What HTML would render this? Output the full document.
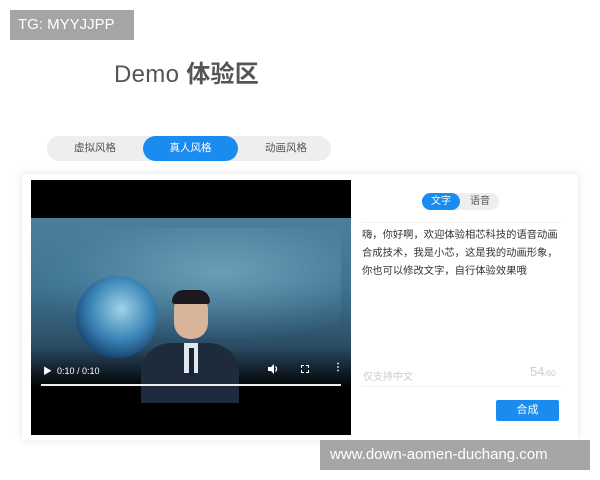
<!DOCTYPE html>
<html><head><meta charset="utf-8"><style>
*{margin:0;padding:0;box-sizing:border-box}
body{width:600px;height:480px;background:#fff;position:relative;overflow:hidden;font-family:"Liberation Sans","Noto Sans CJK SC",sans-serif}
.abs{position:absolute}
.tg{left:10px;top:10px;width:124px;height:30px;background:#a5a5a5;color:#fff;font-size:15px;line-height:30px;padding-left:8px}
.title{left:114px;top:54px;font-size:24px;color:#555;letter-spacing:0.3px}
.tabs{left:47px;top:136px;width:284px;height:25px;border-radius:13px;background:#eee;font-size:10.5px;color:#555}
.tabs span{position:absolute;top:0;line-height:25px}
.act{left:96px;width:95px;height:25px;border-radius:13px;background:#1a8cf0;color:#fff;text-align:center}
.card{left:22px;top:174px;width:556px;height:266px;background:#fff;box-shadow:0 0 8px rgba(0,0,0,.1)}
.video{left:31px;top:180px;width:320px;height:255px;background:#000;overflow:hidden}
.img{left:0;top:38px;width:320px;height:170px;background:linear-gradient(180deg,#4e7d9c 0%,#3f7392 40%,#2b4d66 75%,#000 100%)}
.txt{left:362px;top:227px;width:198px;font-size:10.3px;line-height:18px;color:#333}
.btn{left:496px;top:400px;width:63px;height:21px;background:#1a8cf0;color:#fff;font-size:11px;text-align:center;line-height:21px;border-radius:2px}
.wm{left:320px;top:440px;width:270px;height:30px;background:#a6a6a6;color:#fff;font-size:15px;line-height:30px;padding-left:10px}
</style></head><body>
<div class="abs tg">TG: MYYJJPP</div>
<div class="abs title">Demo <b>体验区</b></div>
<div class="abs tabs">
<span style="left:27px">虚拟风格</span>
<span class="act">真人风格</span>
<span style="left:218px">动画风格</span>
</div>
<div class="abs card"></div>
<div class="abs video">
 <div class="abs img">
  <div class="abs" style="left:10px;top:10px;width:300px;height:110px;background:radial-gradient(ellipse at 60% 40%,rgba(140,190,210,.55),rgba(80,140,170,.2) 60%,transparent 75%)"></div>
  <div class="abs" style="left:45px;top:58px;width:82px;height:82px;border-radius:50%;background:radial-gradient(circle at 55% 40%,#9fd3e8,#3c87b8 45%,#123a66 80%)"></div>
  <div class="abs" style="left:110px;top:125px;width:98px;height:60px;background:#1e2b3d;border-radius:30px 30px 0 0"></div>
  <div class="abs" style="left:153px;top:125px;width:14px;height:30px;background:#dfe6ee"></div>
  <div class="abs" style="left:158px;top:130px;width:5px;height:28px;background:#1a2230"></div>
  <div class="abs" style="left:143px;top:77px;width:34px;height:44px;border-radius:14px 14px 16px 16px;background:#d8b49a"></div>
  <div class="abs" style="left:141px;top:72px;width:38px;height:14px;border-radius:18px 18px 4px 4px;background:#1b1b1f"></div>
 </div>
 <div class="abs" style="left:12px;top:184px;color:#fff;font-size:9px">▶&nbsp;&nbsp;0:10 / 0:10</div>
 <svg class="abs" style="left:236px;top:183px" width="12" height="12" viewBox="0 0 12 12"><path d="M1 4h3l3-3v10l-3-3H1z" fill="#fff"/><path d="M8.5 3.5a3.5 3.5 0 0 1 0 5" stroke="#fff" stroke-width="1.3" fill="none"/></svg>
 <div class="abs" style="left:270px;top:185px;width:8px;height:8px;border:1.5px dashed #fff"></div>
 <div class="abs" style="left:302px;top:182px;color:#fff;font-size:10px;font-weight:bold">⋮</div>
 <div class="abs" style="left:10px;top:204px;width:300px;height:2px;background:#eee"></div>
</div>
<div class="abs" style="left:422px;top:193px;width:77px;height:17px;border-radius:9px;background:#eee"></div>
<div class="abs" style="left:422px;top:193px;width:38px;height:17px;border-radius:9px;background:#1a8cf0;color:#fff;font-size:10px;text-align:center;line-height:17px">文字</div>
<div class="abs" style="left:470px;top:193px;font-size:10px;color:#555;line-height:17px">语音</div>
<div class="abs" style="left:362px;top:222px;width:200px;height:1px;background:#f0f0f0"></div>
<div class="abs txt">嗨，你好啊，欢迎体验相芯科技的语音动画合成技术，我是小芯，这是我的动画形象，你也可以修改文字，自行体验效果哦</div>
<div class="abs" style="left:363px;top:368px;font-size:10px;color:#ccc">仅支持中文</div>
<div class="abs" style="left:530px;top:364px;font-size:13px;color:#ccc">54<span style="font-size:8px">/60</span></div>
<div class="abs" style="left:362px;top:386px;width:200px;height:1px;background:#f2f2f2"></div>
<div class="abs btn">合成</div>
<div class="abs wm">www.down-aomen-duchang.com</div>
</body></html>
